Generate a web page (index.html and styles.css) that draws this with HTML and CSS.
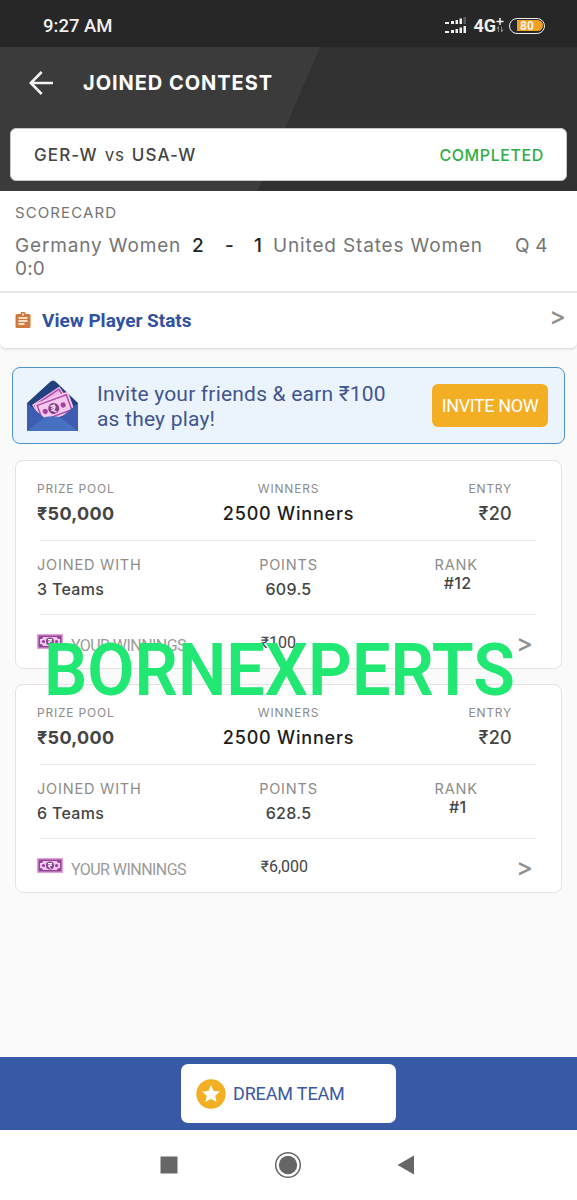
FILE: index.html
```html
<!DOCTYPE html>
<html lang="en">
<head>
    <meta charset="UTF-8">
    <meta name="viewport" content="width=device-width, initial-scale=1.0">
    <title>Joined Contest</title>
    <link rel="stylesheet" href="styles.css">
</head>
<body>
    <div class="status-bar">
        <span class="time">9:27 AM</span>
        <div class="status-icons">
            <svg class="signal" width="23" height="18" viewBox="0 0 23 18">
                <g fill="#f0f0f0">
                    <path d="M1 5h4v2H1zM7 4h3v3H7zM11.500 3h2.500v4h-2.500zM15.500 1.500h2.500V7h-2.500z"/>
                    <path d="M1 14h4v2H1zM7 13h3v3H7zM11.500 12h2.500v4h-2.500zM15.500 10.500h2.500V16h-2.500zM19.500 9h2.500v7h-2.500z"/>
                </g>
                <path d="M19.500 0h2.500v7h-2.500z" fill="#5c5c5c"/>
            </svg>
            <span class="network">4G</span>
            <svg class="plus" width="8" height="18" viewBox="0 0 8 18" fill="none">
                <path d="M4 1v7M.5 4.500h7" stroke="#f0f0f0" stroke-width="1.500"/>
                <path d="M2.500 15V9.500L1 12M5.500 9.500V15L7 12.500" stroke="#8c8c8c"/>
            </svg>
            <span class="battery"><span class="level">80</span></span>
        </div>
    </div>

    <header class="header">
        <div class="title-row">
            <svg width="24" height="24" viewBox="0 0 24 24" fill="none" stroke="#f4f4f4" stroke-width="2.600">
                <path d="M12.700 1L1.800 12l10.900 11M2 12h22"/>
            </svg>
            <h1>JOINED CONTEST</h1>
        </div>
        <div class="match">
            <div class="teams"><span>GER-W</span><span class="vs">vs</span><span>USA-W</span></div>
            <span class="state">COMPLETED</span>
        </div>
    </header>

    <section class="scorecard">
        <div class="score">
            <h2>SCORECARD</h2>
            <div class="score-line">
                <span class="home">Germany Women</span>
                <b class="home-goals">2</b>
                <b class="dash">-</b>
                <b class="away-goals">1</b>
                <span class="away">United States Women</span>
                <span class="quarter">Q 4</span>
            </div>
            <div class="clock">0:0</div>
        </div>
        <div class="stats">
            <svg width="16" height="17" viewBox="0 0 16 17">
                <path d="M2 2h3.500a2.500 2.500 0 0 1 5 0H14a1.500 1.500 0 0 1 1.500 1.500v11A1.500 1.500 0 0 1 14 16H2a1.500 1.500 0 0 1-1.500-1.500v-11A1.500 1.500 0 0 1 2 2z" fill="#cf7a3c"/>
                <circle cx="8" cy="2.500" r="1" fill="#fff"/>
                <path d="M3.500 6h9M3.500 9h9M3.500 12h6" stroke="#fff" stroke-width="1.400"/>
            </svg>
            <a class="stats-link">View Player Stats</a>
            <span class="arrow">&gt;</span>
        </div>
    </section>

    <main class="content">
        <div class="invite">
            <svg width="52" height="52" viewBox="0 0 52 52">
                <path d="M0 23L23 2q3-3 6 0l22 21v28H0z" fill="#21427f"/>
                <g transform="rotate(-34 26 24)">
                    <path d="M8 13h33v19H8z" fill="#f0b7e5"/>
                    <path d="M10 15h29v15H10z" fill="none" stroke="#b04cad" stroke-width="1.500"/>
                </g>
                <g transform="rotate(-20 28 29)">
                    <path d="M10 17h36v21H10z" fill="#f6c9ec"/>
                    <path d="M12.500 19.500h31v16h-31z" fill="none" stroke="#b04cad" stroke-width="1.500"/>
                    <circle cx="27" cy="28" r="5.500" fill="#8e3b91"/>
                    <circle cx="18" cy="28" r="2.600" fill="#a045a0"/>
                    <circle cx="37" cy="28" r="2.600" fill="#a045a0"/>
                    <path d="M24.500 25h5M24.500 27.200h5M25 25c5 0 4 4.300 0 4.300l3.500 3" fill="none" stroke="#fff" stroke-width="1.200"/>
                </g>
                <path d="M0 23l17 14.500h17L51 23v28H0z" fill="#3c5db1"/>
                <path d="M0 51l17-13q2-1.500 4-1.500h9q2 0 4 1.500l17 13z" fill="#4870c0"/>
            </svg>
            <p>Invite your friends &amp; earn ₹100<br>as they play!</p>
            <button class="invite-btn">INVITE NOW</button>
        </div>

        <article class="card">
            <div class="row top-row">
                <div class="cell"><span class="small-label">PRIZE POOL</span><span class="pool">₹50,000</span></div>
                <div class="cell center"><span class="small-label">WINNERS</span><span class="winners">2500 Winners</span></div>
                <div class="cell entry"><span class="small-label">ENTRY</span><span class="fee">₹20</span></div>
            </div>
            <div class="row mid-row">
                <div class="cell"><span class="label">JOINED WITH</span><span class="value">3 Teams</span></div>
                <div class="cell center"><span class="label">POINTS</span><span class="value">609.5</span></div>
                <div class="cell center"><span class="label">RANK</span><span class="value rank">#12</span></div>
            </div>
            <div class="row win-row">
                <div class="winnings">
                    <svg width="26" height="15" viewBox="0 0 26 15">
                        <path d="M0 0h26v15H0z" fill="#e3a0dc"/>
                        <path d="M1.500 1.500h23v12h-23z" fill="#8f4594"/>
                        <path d="M6 3h14q0 2 3 2v5q-3 0-3 2H6q0-2-3-2V5q3 0 3-2z" fill="#f5c6ef"/>
                        <circle cx="13" cy="7.500" r="4" fill="#8f4594"/>
                        <circle cx="6.500" cy="7.500" r="1.600" fill="#8f4594"/>
                        <circle cx="19.500" cy="7.500" r="1.600" fill="#8f4594"/>
                        <path d="M11 5.500h4M11 7.200h4M11.500 5.500c3.500 0 3 3 0 3l2.500 2" fill="none" stroke="#fff"/>
                    </svg>
                    <span>YOUR WINNINGS</span>
                </div>
                <span class="amount">₹100</span>
                <span class="arrow">&gt;</span>
            </div>
        </article>

        <article class="card">
            <div class="row top-row">
                <div class="cell"><span class="small-label">PRIZE POOL</span><span class="pool">₹50,000</span></div>
                <div class="cell center"><span class="small-label">WINNERS</span><span class="winners">2500 Winners</span></div>
                <div class="cell entry"><span class="small-label">ENTRY</span><span class="fee">₹20</span></div>
            </div>
            <div class="row mid-row">
                <div class="cell"><span class="label">JOINED WITH</span><span class="value">6 Teams</span></div>
                <div class="cell center"><span class="label">POINTS</span><span class="value">628.5</span></div>
                <div class="cell center"><span class="label">RANK</span><span class="value rank">#1</span></div>
            </div>
            <div class="row win-row">
                <div class="winnings">
                    <svg width="26" height="15" viewBox="0 0 26 15">
                        <path d="M0 0h26v15H0z" fill="#e3a0dc"/>
                        <path d="M1.500 1.500h23v12h-23z" fill="#8f4594"/>
                        <path d="M6 3h14q0 2 3 2v5q-3 0-3 2H6q0-2-3-2V5q3 0 3-2z" fill="#f5c6ef"/>
                        <circle cx="13" cy="7.500" r="4" fill="#8f4594"/>
                        <circle cx="6.500" cy="7.500" r="1.600" fill="#8f4594"/>
                        <circle cx="19.500" cy="7.500" r="1.600" fill="#8f4594"/>
                        <path d="M11 5.500h4M11 7.200h4M11.500 5.500c3.500 0 3 3 0 3l2.500 2" fill="none" stroke="#fff"/>
                    </svg>
                    <span>YOUR WINNINGS</span>
                </div>
                <span class="amount">₹6,000</span>
                <span class="arrow">&gt;</span>
            </div>
        </article>
        <div class="watermark">BORNEXPERTS</div>
    </main>

    <footer class="footer">
        <button class="dream">
            <svg width="30" height="30" viewBox="0 0 30 30">
                <circle cx="15" cy="15" r="14.700" fill="#f4b024"/>
                <path d="M15 6l2.600 5.900 6.300.7-4.700 4.200 1.300 6.200-5.500-3.200L9.500 23l1.300-6.200-4.700-4.200 6.300-.7z" fill="#fff"/>
            </svg>
            <span>DREAM TEAM</span>
        </button>
    </footer>

    <nav class="nav-bar">
        <svg width="18" height="18" viewBox="0 0 18 18"><path d="M.5.500h17v17H.5z" fill="#666"/></svg>
        <svg width="28" height="28" viewBox="0 0 28 28">
            <circle cx="14" cy="14" r="12.300" fill="none" stroke="#666" stroke-width="1.500"/>
            <circle cx="14" cy="14" r="9.200" fill="#666"/>
        </svg>
        <svg width="18" height="20" viewBox="0 0 18 20"><path d="M.5 10L17 .5v19z" fill="#666"/></svg>
    </nav>
</body>
</html>
```

FILE: styles.css
```css
* {
    box-sizing: border-box;
}
body {
    margin: 0;
    width: 577px;
    height: 1200px;
    display: flex;
    flex-direction: column;
    background: #fafafa;
    font-family: Inter, sans-serif;
    color: #444;
}
h1, h2, p {
    margin: 0;
}
button {
    border: none;
    font-family: Roboto, sans-serif;
}
.status-bar {
    height: 47px;
    background: #272727;
    color: #f0f0f0;
    font-family: Roboto, sans-serif;
    display: flex;
    justify-content: space-between;
    align-items: center;
    padding: 4px 32px 0 43px;
}
.time {
    font-size: 18.5px;
    font-weight: 500;
}
.status-icons {
    display: flex;
    align-items: center;
}
.network {
    font-size: 18px;
    font-weight: 700;
    margin: 0 0 0 6px;
}
.battery {
    width: 36px;
    height: 16px;
    margin-left: 5px;
    border: 1.5px solid #f0f0f0;
    border-radius: 8px;
    padding: 1px 1px 1px 7px;
}
.level {
    display: block;
    height: 11px;
    background: #f0a020;
    border-radius: 0 6px 6px 0;
    font-size: 12px;
    line-height: 12px;
    font-weight: 700;
    padding-left: 3px;
}
.header {
    height: 144px;
    padding: 24px 10px 0;
    background: linear-gradient(113.5deg, #3b3b3b 50%, #313131 50.1%);
}
.title-row {
    display: flex;
    align-items: center;
    gap: 30px;
    height: 24px;
    padding-left: 19px;
}
.title-row h1 {
    color: #fff;
    font-size: 20px;
    font-weight: 700;
    letter-spacing: 0.95px;
}
.match {
    height: 53px;
    margin-top: 33px;
    padding: 0 22px 0 23px;
    background: #fff;
    border: 1px solid #c8c8c8;
    border-radius: 6px;
    display: flex;
    justify-content: space-between;
    align-items: center;
    font-size: 17px;
    font-weight: 450;
    letter-spacing: 1.1px;
}
.teams {
    display: flex;
    gap: 7px;
}
.vs {
    font-weight: 400;
    letter-spacing: 0.8px;
}
.state {
    color: #30ae45;
    font-size: 16px;
    font-weight: 500;
    letter-spacing: 0.6px;
}
.scorecard {
    height: 158px;
    background: #fff;
    border-bottom: 1px solid #e0e0e0;
    border-radius: 0 0 6px 6px;
    box-shadow: 0 1px 2px rgba(0, 0, 0, 0.08);
}
.score {
    height: 102px;
    padding: 12px 15px 0;
    border-bottom: 2px solid #e6e6e6;
    color: #757575;
    font-size: 19px;
    line-height: 23px;
    letter-spacing: 0.85px;
}
.score h2 {
    font-size: 15px;
    line-height: 20px;
    font-weight: 400;
    letter-spacing: 1.1px;
    margin-bottom: 11px;
}
.score-line {
    display: flex;
    white-space: nowrap;
}
.score-line b {
    color: #222;
    font-weight: 500;
}
.home {
    width: 177px;
}
.home-goals {
    width: 33px;
}
.dash {
    width: 29px;
}
.away-goals {
    width: 19px;
}
.away {
    width: 242px;
}
.quarter, .clock {
    letter-spacing: 0.2px;
}
.stats {
    height: 55px;
    padding: 0 11px 0 15px;
    display: flex;
    align-items: center;
}
.stats-link {
    flex: 1;
    margin-left: 11px;
    color: #2f52a0;
    font-family: Roboto, sans-serif;
    font-size: 19px;
    font-weight: 700;
}
.arrow {
    color: #909090;
    font-size: 25px;
    font-weight: 500;
    line-height: 22px;
}
.stats .arrow {
    margin-top: -9px;
}
.content {
    flex: 1;
    position: relative;
    padding: 18px 12px 0;
}
.invite {
    height: 77px;
    margin-bottom: 16px;
    padding: 0 16px 0 14px;
    background: #ebf4fd;
    border: 1.5px solid #4f95cb;
    border-radius: 8px;
    display: flex;
    align-items: center;
}
.invite p {
    flex: 1;
    margin: 3px 0 0 18px;
    color: #41558f;
    font-family: Roboto, sans-serif;
    font-size: 21px;
    line-height: 25px;
    letter-spacing: 0.2px;
}
.invite-btn {
    width: 116px;
    height: 43px;
    padding: 0;
    background: #f4ae24;
    border-radius: 6px;
    color: #fff;
    font-size: 18px;
    letter-spacing: -0.4px;
}
.card {
    height: 209px;
    margin: 0 3px 15.4px;
    padding: 0 21px;
    background: #fff;
    border: 1.5px solid #e3e3e3;
    border-radius: 8px;
}
.row {
    display: grid;
    grid-template-columns: repeat(3, 1fr);
    background: linear-gradient(#ececec, #ececec) 3px 100% / 496px 1px no-repeat;
}
.top-row {
    height: 80px;
    padding-top: 20px;
}
.mid-row {
    height: 74px;
    padding-top: 16px;
}
.win-row {
    background: none;
    height: 53px;
    align-items: start;
    padding-top: 17px;
    font-family: Roboto, sans-serif;
}
.cell {
    display: flex;
    flex-direction: column;
    gap: 4px;
    white-space: nowrap;
}
.center {
    align-items: center;
}
.entry {
    align-items: flex-end;
    padding-right: 28px;
}
.small-label {
    font-size: 12px;
    line-height: 16px;
    letter-spacing: 0.8px;
    color: #8c8c8c;
}
.label {
    font-size: 14.5px;
    line-height: 16px;
    letter-spacing: 0.8px;
    color: #8c8c8c;
}
.pool, .winners, .fee {
    font-size: 18px;
    line-height: 25px;
    font-weight: 500;
    letter-spacing: 0.3px;
}
.pool {
    font-weight: 700;
}
.winners {
    color: #1c1c1c;
    letter-spacing: 0.8px;
}
.value {
    font-size: 16px;
    line-height: 24px;
    font-weight: 500;
    letter-spacing: 0.3px;
}
.rank {
    margin: -6px 0 0 3px;
}
.winnings {
    display: flex;
    gap: 8px;
    margin-top: 2px;
    color: #9a9a9a;
    font-size: 16px;
    line-height: 23px;
    letter-spacing: -0.55px;
    white-space: nowrap;
}
.amount {
    font-size: 16px;
    line-height: 22px;
    padding-left: 56px;
}
.win-row .arrow {
    justify-self: end;
    margin: 0 7px 0 0;
    font-family: Inter, sans-serif;
}
/* sits over the gap between the two cards */
.watermark {
    position: absolute;
    top: 280px;
    left: 44px;
    color: #20e872;
    font-family: Roboto, sans-serif;
    font-size: 72px;
    line-height: 84px;
    font-weight: 600;
    transform: scaleX(0.949);
    transform-origin: left;
}
.footer {
    height: 73px;
    background: #3759a6;
    display: flex;
    justify-content: center;
    align-items: center;
}
.dream {
    width: 215px;
    height: 59px;
    padding: 0 15px;
    background: #fff;
    border-radius: 7px;
    display: flex;
    align-items: center;
    gap: 7px;
    color: #3759a6;
    font-size: 18px;
    letter-spacing: -0.15px;
}
.nav-bar {
    height: 70px;
    background: #fff;
    display: flex;
    justify-content: space-between;
    align-items: center;
    padding: 0 162px 0 160px;
}
```
